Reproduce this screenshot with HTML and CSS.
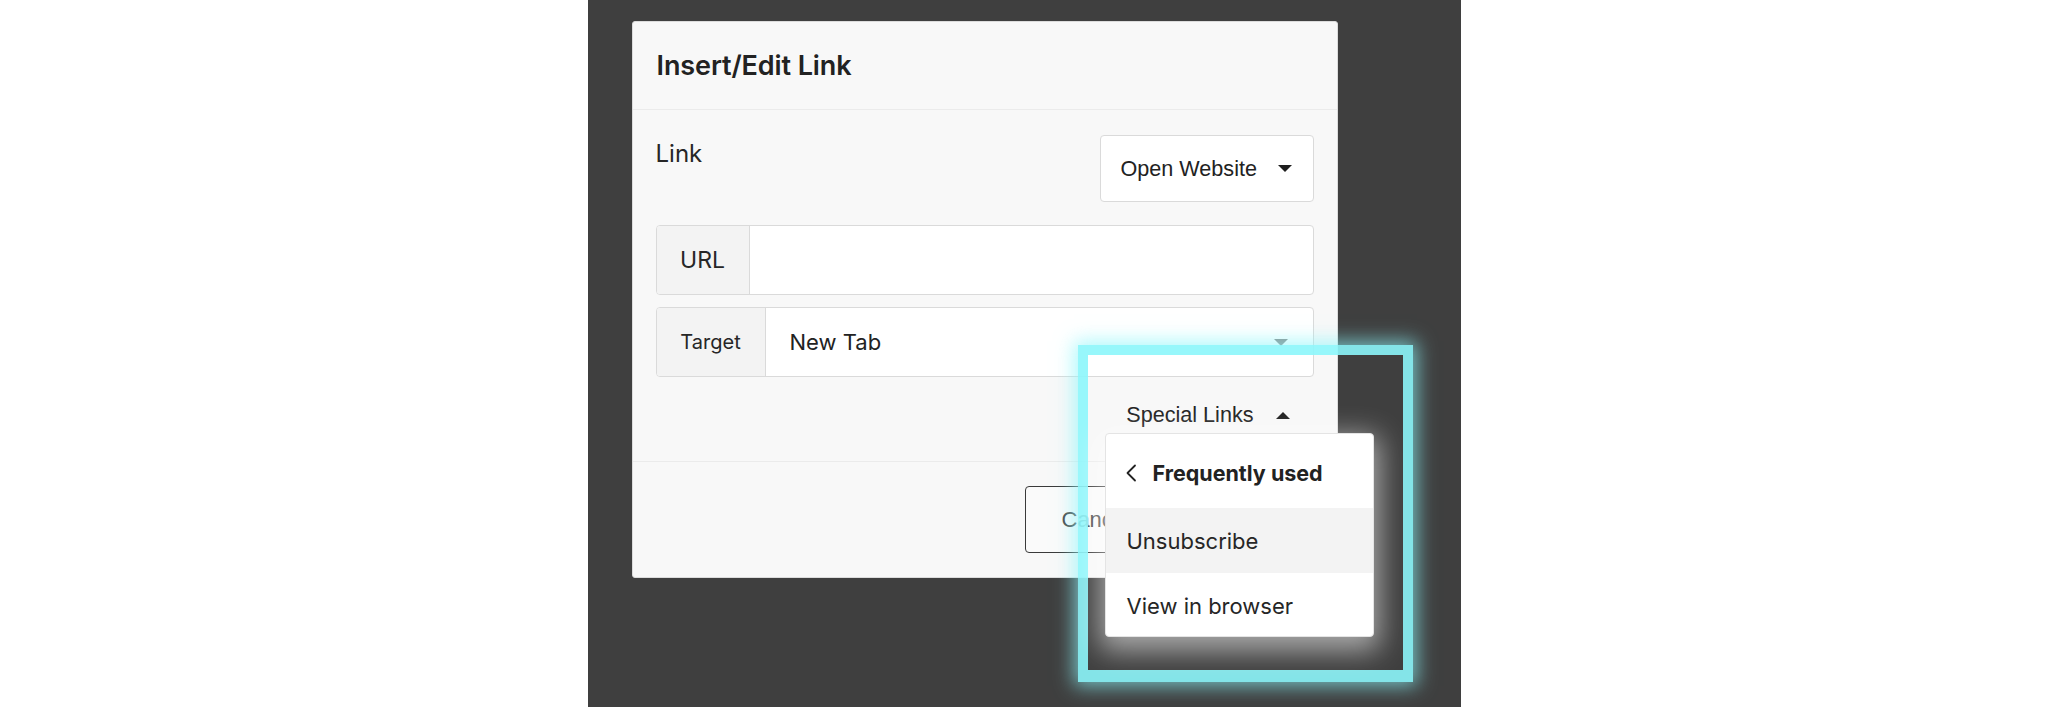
FILE: index.html
```html
<!DOCTYPE html>
<html lang="en">
<head>
<meta charset="utf-8">
<title>Insert/Edit Link</title>
<link rel="stylesheet" href="styles.css">
</head>
<body>
<div class="stage">
  <div class="panel">
    <div class="dialog">
      <div class="dialog-header">
        <h1 class="dialog-title">Insert/Edit Link</h1>
      </div>
      <div class="dialog-body">
        <div class="link-row">
          <span class="field-label">Link</span>
          <button class="type-btn">
            <span>Open Website</span>
            <span class="caret caret-down"></span>
          </button>
        </div>
        <div class="input-group">
          <span class="addon addon-url">URL</span>
          <span class="input"></span>
        </div>
        <div class="input-group">
          <span class="addon addon-target">Target</span>
          <span class="select">
            <span class="select-value">New Tab</span>
            <span class="caret caret-down caret-muted"></span>
          </span>
        </div>
        <div class="special-row">
          <button class="special-btn">
            <span>Special Links</span>
            <span class="caret caret-up"></span>
          </button>
        </div>
      </div>
      <div class="dialog-footer">
        <button class="btn btn-cancel">Cancel</button>
        <button class="btn btn-save">Save</button>
      </div>
    </div>

    <div class="highlight"></div>

    <div class="menu">
      <div class="menu-head">
        <svg class="chev" viewBox="0 0 12 18" width="12" height="18"><path d="M10 1.5 L2.5 9 L10 16.5" fill="none" stroke="#222" stroke-width="1.8" stroke-linecap="round" stroke-linejoin="round"/></svg>
        <span>Frequently used</span>
      </div>
      <div class="menu-item menu-item-active">Unsubscribe</div>
      <div class="menu-item">View in browser</div>
    </div>
  </div>
</div>
</body>
</html>
```

FILE: styles.css
```css
html, body {
  margin: 0;
  padding: 0;
  background: #ffffff;
}

.stage {
  display: flex;
  justify-content: center;
  height: 707px;
  overflow: hidden;
}

.panel {
  position: relative;
  width: 873px;
  height: 707px;
  background: #3f3f3f;
  padding: 21px 0 0 44px;
  box-sizing: border-box;
  font-family: Inter, "Noto Sans", sans-serif;
  color: #222;
}

.dialog {
  width: 706px;
  height: 557px;
  box-sizing: border-box;
  background: #f8f8f8;
  border: 1px solid #dcdcdc;
  border-radius: 3px;
  display: flex;
  flex-direction: column;
}

.dialog-header {
  height: 88px;
  flex: 0 0 88px;
  box-sizing: border-box;
  border-bottom: 1px solid #ebebeb;
  display: flex;
  align-items: center;
  padding: 0 24px;
}

.dialog-title {
  margin: 0;
  font-size: 27px;
  font-weight: 600;
  color: #222;
  letter-spacing: -0.1px;
}

.dialog-body {
  flex: 0 0 352px;
  box-sizing: border-box;
  padding: 25px 23px 0 23px;
  border-bottom: 1px solid #ebebeb;
}

.link-row {
  display: flex;
  justify-content: space-between;
  align-items: flex-start;
}

.field-label {
  font-size: 24px;
  color: #262626;
  margin-top: 4px;
}

.type-btn {
  width: 214px;
  height: 67px;
  box-sizing: border-box;
  background: #fff;
  border: 1px solid #dadada;
  border-radius: 4px;
  display: flex;
  align-items: center;
  justify-content: space-between;
  padding: 0 21px 0 20px;
  font-family: "Liberation Sans", Arial, sans-serif;
  font-size: 21.6px;
  color: #222;
}

.caret {
  display: inline-block;
  width: 0;
  height: 0;
  border-left: 7px solid transparent;
  border-right: 7px solid transparent;
}

.caret-down {
  border-top: 7px solid #1e1e1e;
}

.caret-up {
  border-bottom: 7px solid #1e1e1e;
}

.caret-muted {
  border-top-color: #8a8a8a;
}

.input-group {
  display: flex;
  height: 70px;
  box-sizing: border-box;
  border: 1px solid #dadada;
  border-radius: 4px;
  background: #fff;
  margin-top: 12px;
  overflow: hidden;
}

.link-row + .input-group {
  margin-top: 23px;
}

.addon {
  background: #f3f3f3;
  border-right: 1px solid #dadada;
  display: flex;
  align-items: center;
  justify-content: center;
  color: #262626;
  box-sizing: border-box;
}

.addon-url {
  width: 93px;
  font-size: 23px;
}

.addon-target {
  width: 109px;
  font-size: 20px;
}

.input {
  flex: 1;
}

.select {
  flex: 1;
  display: flex;
  align-items: center;
  justify-content: space-between;
  padding: 0 25px 0 24px;
}

.select-value {
  font-size: 22px;
  color: #222;
}

.special-row {
  display: flex;
  justify-content: flex-end;
  margin-top: 25px;
  padding-right: 24px;
}

.special-btn {
  background: none;
  border: 0;
  padding: 0;
  display: flex;
  align-items: center;
  gap: 22px;
  font-family: "Liberation Sans", Arial, sans-serif;
  font-size: 21.6px;
  color: #222;
}

.dialog-footer {
  flex: 1;
  display: flex;
  justify-content: flex-end;
  align-items: flex-start;
  gap: 12px;
  padding: 24px 23px 0 0;
}

.btn {
  height: 67px;
  box-sizing: border-box;
  border-radius: 4px;
  font-family: "Liberation Sans", Arial, sans-serif;
  font-size: 22px;
  text-align: left;
}

.btn-cancel {
  width: 141px;
  background: #fafafa;
  border: 1px solid #3a3a3a;
  color: #4a4a4a;
  padding: 0 0 0 36px;
}

.btn-save {
  width: 136px;
  background: #222;
  border: 1px solid #222;
  color: #fff;
  text-align: center;
}

/* annotation frame drawn over the screenshot */
.highlight {
  position: absolute;
  left: 490px;
  top: 345px;
  width: 335px;
  height: 337px;
  box-sizing: border-box;
  border: 10px solid rgba(140, 246, 251, 0.9);
  border-bottom-width: 12px;
  box-shadow: 0 0 18px 4px rgba(140, 246, 251, 0.7);
  pointer-events: none;
}

.menu {
  position: absolute;
  left: 517px;
  top: 433px;
  width: 269px;
  height: 204px;
  box-sizing: border-box;
  background: #fff;
  border: 1px solid #e4e4e4;
  border-radius: 4px;
  box-shadow: 0 8px 28px 6px rgba(255, 255, 255, 0.55);
  overflow: hidden;
  display: flex;
  flex-direction: column;
}

.menu-head {
  height: 74px;
  flex: 0 0 74px;
  box-sizing: border-box;
  padding: 3px 0 0 19px;
  display: flex;
  align-items: center;
  gap: 16px;
  font-size: 21.5px;
  font-weight: 700;
  color: #222;
}

.chev {
  display: block;
}

.menu-item {
  height: 65px;
  flex: 0 0 65px;
  box-sizing: border-box;
  padding: 1px 0 0 21px;
  display: flex;
  align-items: center;
  font-size: 22px;
  color: #262626;
}

.menu-item-active {
  background: #f3f3f3;
}
```
